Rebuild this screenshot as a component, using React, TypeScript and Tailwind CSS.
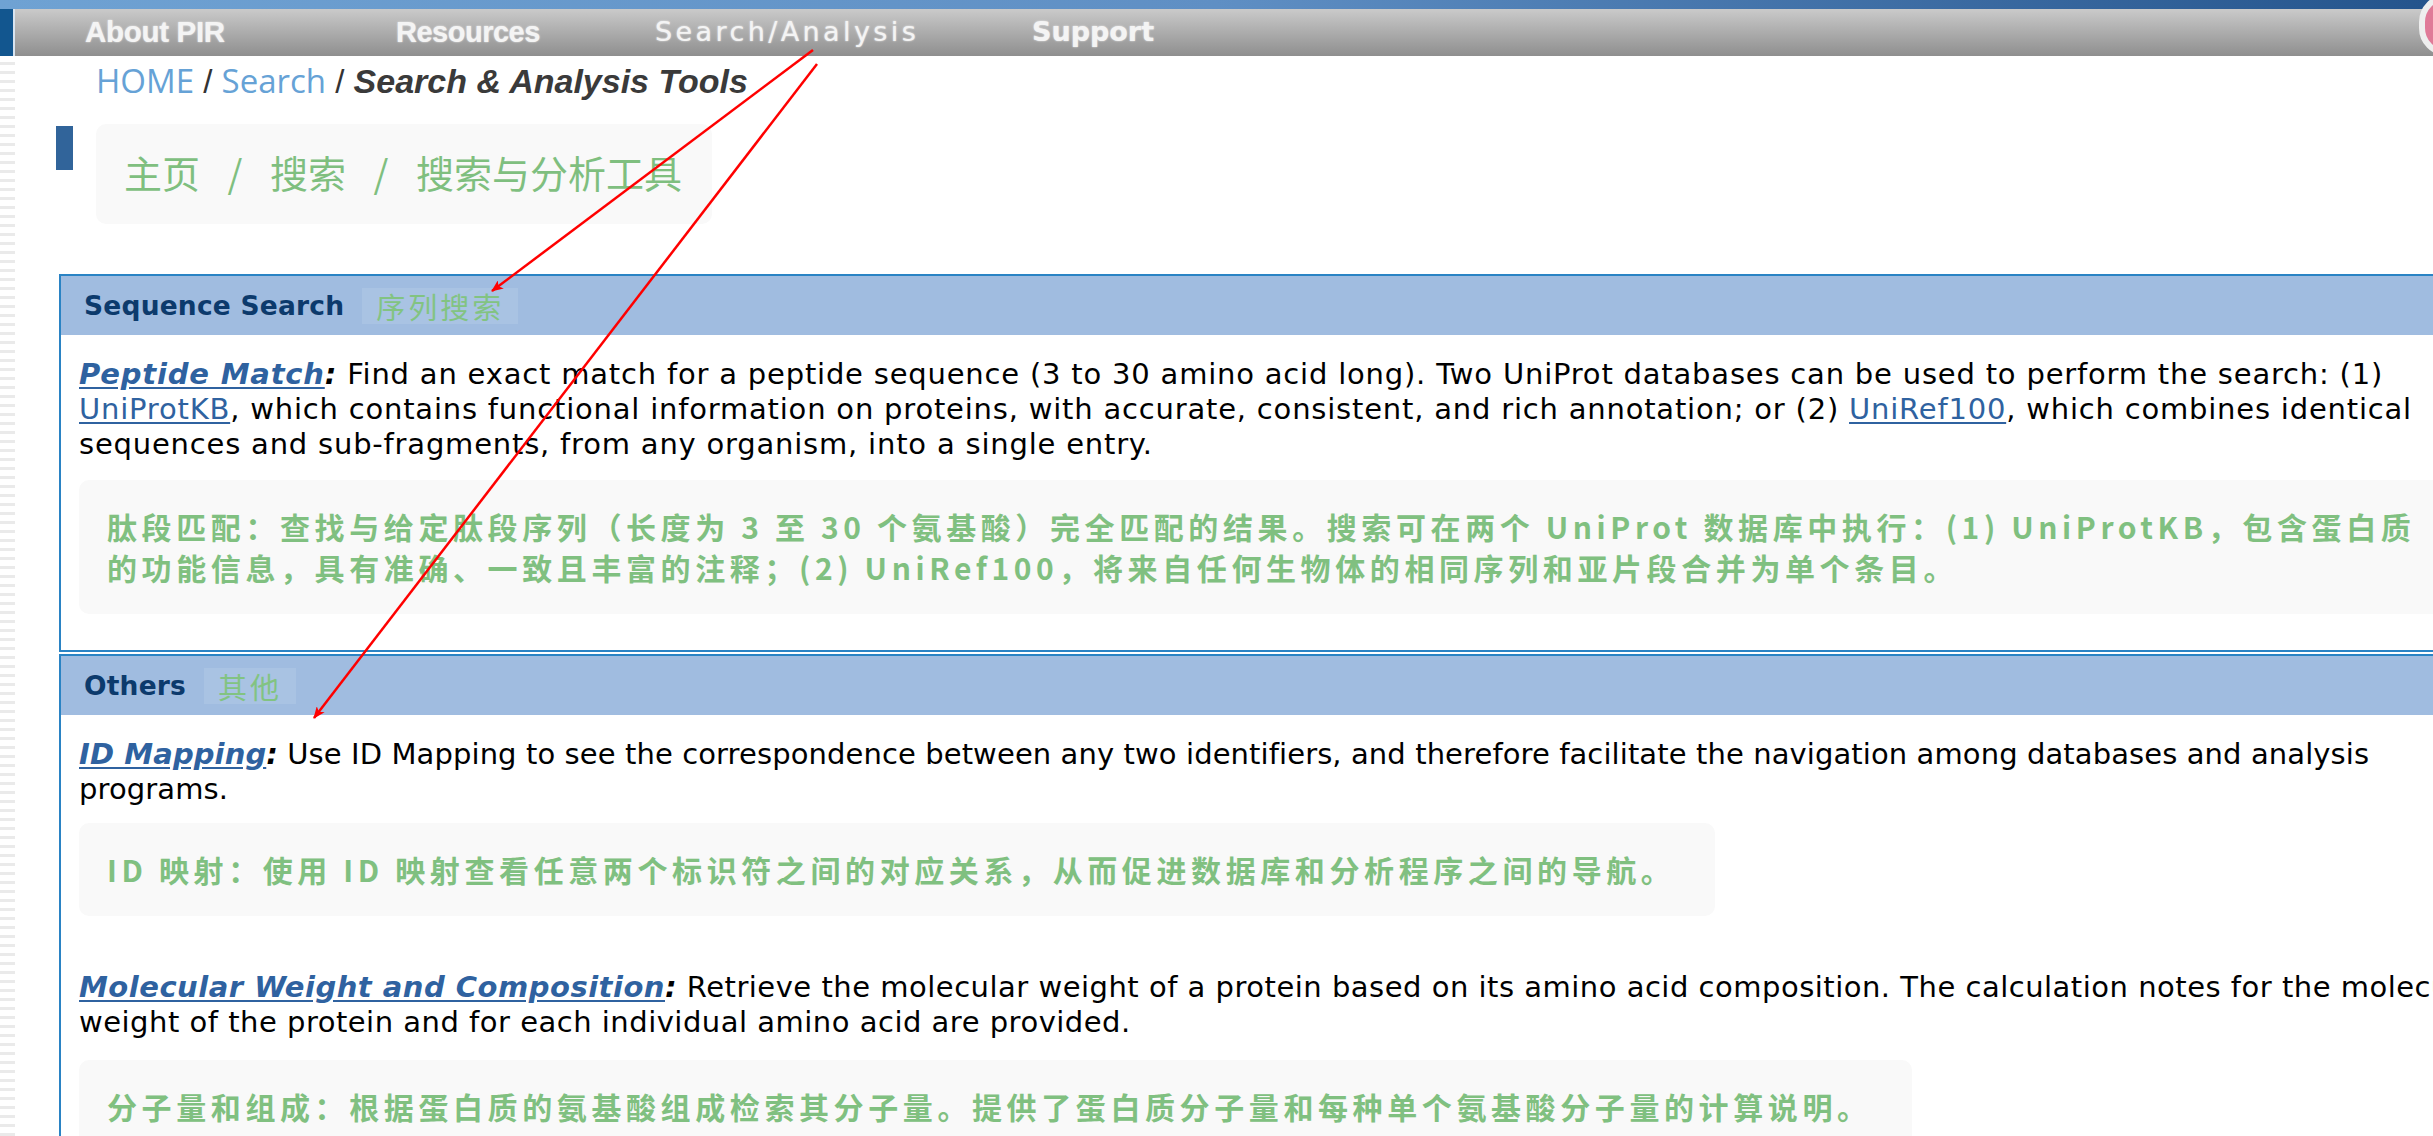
import React from 'react';

const cjk = { fontFamily: '"Noto Sans CJK SC", sans-serif' };
const verdana = { fontFamily: '"DejaVu Sans", Verdana, sans-serif' };
const arial = { fontFamily: '"Liberation Sans", Arial, sans-serif' };

function NavBar() {
  return (
    <div className="flex h-[47px] items-center bg-gradient-to-b from-[#cacaca] to-[#8f8f8f] pl-[70px] text-[#f4f4f4] [text-shadow:0_0_2px_rgba(255,255,255,0.8)]">
      <div className="w-[311px] text-[29.5px] font-bold tracking-[-0.3px]" style={arial}>About PIR</div>
      <div className="w-[259px] text-[29px] font-bold tracking-[-0.5px]" style={arial}>Resources</div>
      <div className="w-[377px] text-[27px] tracking-[3.4px]" style={verdana}>Search/Analysis</div>
      <div className="w-[200px] text-[27px] font-bold" style={verdana}>Support</div>
    </div>
  );
}

function LeftStrip() {
  return (
    <div className="flex w-[15px] shrink-0 flex-col">
      <div className="h-[47px] border-r-2 border-[#d8e4f0] bg-[#12568f]" />
      <div className="flex-1 bg-[repeating-linear-gradient(to_bottom,#ffffff_0px,#ffffff_6px,#eaeaea_6px,#eaeaea_9px)]" />
    </div>
  );
}

function Chip({ text }: { text: string }) {
  return (
    <span
      className="ml-[18px] inline-block bg-[#a9c3e3] px-[14px] text-[29px] leading-[36px] tracking-[3px] text-[#82c382]"
      style={cjk}
    >
      {text}
    </span>
  );
}

function ZhNote({ children, full }: { children: React.ReactNode; full?: boolean }) {
  return (
    <div
      className={`${full ? 'block' : 'inline-block'} rounded-[10px] bg-[#f9f9f9] py-[26px] pr-[40px] pl-[28px] text-[30px] leading-[41px] font-bold tracking-[4.6px] whitespace-nowrap text-[#80c080]`}
      style={cjk}
    >
      {children}
    </div>
  );
}

function Lead({ children }: { children: React.ReactNode }) {
  return (
    <>
      <a className="font-bold italic text-[#2f62a0] underline underline-offset-[3px]">{children}</a>
      <b className="italic">:</b>{' '}
    </>
  );
}

function Link({ children }: { children: React.ReactNode }) {
  return <a className="text-[#2f62a0] underline underline-offset-[3px]">{children}</a>;
}

function Section({ title, zh, children }: { title: string; zh: string; children: React.ReactNode }) {
  return (
    <div className="w-[2430px] border-2 border-[#2a83c4]">
      <div className="flex h-[59px] items-center bg-[#a0bce0] pl-[23px]">
        <span className="text-[26.5px] font-bold tracking-[0.2px] text-[#0c3a6c]" style={verdana}>
          {title}
        </span>
        <Chip text={zh} />
      </div>
      {children}
    </div>
  );
}

function Arrows() {
  return (
    <svg className="pointer-events-none absolute top-0 left-0" width="2433" height="1136">
      <defs>
        <marker id="ah" markerWidth="12" markerHeight="10" refX="11" refY="5" orient="auto" markerUnits="userSpaceOnUse">
          <path d="M0 0 L12 5 L0 10 L3 5 Z" fill="#ff0000" />
        </marker>
      </defs>
      <line x1="813" y1="50" x2="492" y2="291" stroke="#ff0000" strokeWidth="2.5" markerEnd="url(#ah)" />
      <line x1="817" y1="64" x2="314" y2="718" stroke="#ff0000" strokeWidth="2.5" markerEnd="url(#ah)" />
    </svg>
  );
}

export default function App() {
  return (
    <div className="relative h-[1136px] w-full overflow-hidden bg-white">
      <div className="h-[9px] bg-gradient-to-r from-[#6fa2d3] via-[#5f8fc4] to-[#24548c]" />
      <div className="flex h-[1127px]">
        <LeftStrip />
        <div className="flex-1">
          <NavBar />

          <div className="pt-[5px] pl-[81px] text-[33px] leading-[40px] text-[#333]">
            <span className="text-[#66a2d6]" style={{ fontFamily: '"Open Sans", sans-serif' }}>HOME</span>
            <span style={arial}> / </span>
            <span className="text-[#66a2d6]" style={{ fontFamily: '"Open Sans", sans-serif' }}>Search</span>
            <span style={arial}> / </span>
            <span className="text-[34px] font-bold italic text-[#3a3a3a]" style={arial}>
              Search &amp; Analysis Tools
            </span>
          </div>

          <div className="mt-[22px] flex items-start pl-[41px]">
            <div className="mt-[2px] h-[44px] w-[17px] bg-[#31649a]" />
            <div className="ml-[23px] flex h-[100px] items-center rounded-[10px] bg-[#f9f9f9] pr-[30px] pl-[28px] pb-[6px] text-[38px] text-[#7fbf7f]" style={cjk}>
              <span>主页</span>
              <span className="w-[70px] text-center">/</span>
              <span>搜索</span>
              <span className="w-[70px] text-center">/</span>
              <span>搜索与分析工具</span>
            </div>
          </div>

          <div className="mt-[50px] pl-[44px] text-[29px] leading-[35px] tracking-[0.7px] whitespace-nowrap text-black" style={verdana}>
            <Section title="Sequence Search" zh="序列搜索">
              <div className="px-[18px] pt-[22px] pb-[36px]">
                <p className="tracking-[0.8px]">
                  <Lead>Peptide Match</Lead>
                  Find an exact match for a peptide sequence (3 to 30 amino acid long). Two UniProt databases can be used to
                  perform the search: (1)
                  <br />
                  <Link>UniProtKB</Link>, which contains functional information on proteins, with accurate, consistent, and
                  rich annotation; or (2) <Link>UniRef100</Link>, which combines identical
                  <br />
                  sequences and sub-fragments, from any organism, into a single entry.
                </p>
                <div className="mt-[18px]">
                  <ZhNote full>
                    肽段匹配：查找与给定肽段序列（长度为 3 至 30 个氨基酸）完全匹配的结果。搜索可在两个 UniProt 数据库中执行：(1) UniProtKB，包含蛋白质
                    <br />
                    的功能信息，具有准确、一致且丰富的注释；(2) UniRef100，将来自任何生物体的相同序列和亚片段合并为单个条目。
                  </ZhNote>
                </div>
              </div>
            </Section>
            <div className="h-[2px]" />
            <Section title="Others" zh="其他">
              <div className="px-[18px] pt-[22px]">
                <p className="tracking-[0.1px]">
                  <Lead>ID Mapping</Lead>
                  Use ID Mapping to see the correspondence between any two identifiers, and therefore facilitate the
                  navigation among databases and analysis
                  <br />
                  programs.
                </p>
                <div className="mt-[16px]">
                  <ZhNote>ID 映射：使用 ID 映射查看任意两个标识符之间的对应关系，从而促进数据库和分析程序之间的导航。</ZhNote>
                </div>
                <p className="mt-[54px] tracking-[0.5px]">
                  <Lead>Molecular Weight and Composition</Lead>
                  Retrieve the molecular weight of a protein based on its amino acid composition. The calculation notes for
                  the molecular
                  <br />
                  weight of the protein and for each individual amino acid are provided.
                </p>
                <div className="mt-[20px]">
                  <ZhNote>分子量和组成：根据蛋白质的氨基酸组成检索其分子量。提供了蛋白质分子量和每种单个氨基酸分子量的计算说明。</ZhNote>
                </div>
              </div>
            </Section>
          </div>
        </div>
      </div>
      <div className="absolute top-[-6px] right-[-42px] h-[62px] w-[56px] rounded-full border-[6px] border-[#eeeeee] bg-[#e07a98]" />
      <Arrows />
    </div>
  );
}
